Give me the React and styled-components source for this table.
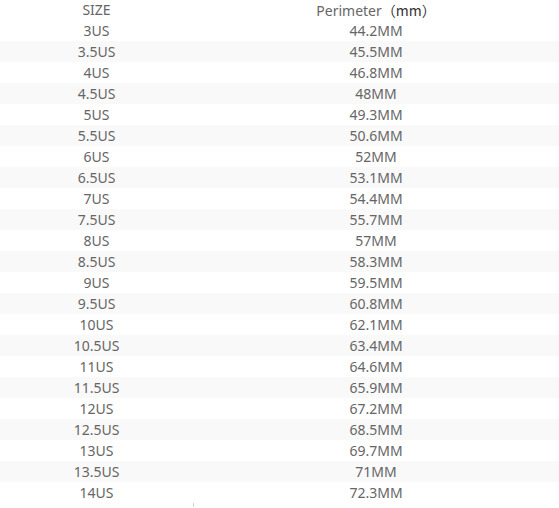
import React from "react";
import styled, { createGlobalStyle } from "styled-components";

const GlobalStyle = createGlobalStyle`
  body {
    margin: 0;
    background: #fff;
    font-family: "Noto Sans", "Open Sans", "Noto Sans CJK SC", sans-serif;
  }
`;

const Table = styled.div`
  width: 559px;
  display: flex;
  flex-direction: column;
  color: #666;
  font-size: 14px;
`;

const Row = styled.div`
  display: grid;
  grid-template-columns: 193px 1fr;
  height: ${(props) => (props.head ? "20px" : "21px")};
  align-items: center;
  background-color: ${(props) => (props.striped ? "#f9f9f9" : "#fff")};
`;

const Cell = styled.div`
  text-align: center;
  line-height: 1;
  white-space: nowrap;
`;

const Unit = styled.span`
  color: #333;
  font-family: "Noto Sans CJK SC", sans-serif;
`;

const Tick = styled.div`
  margin-left: 193px;
  width: 1px;
  height: 4px;
  background-color: #d0d0d0;
`;

const sizes = [
  ["3US", "44.2MM"],
  ["3.5US", "45.5MM"],
  ["4US", "46.8MM"],
  ["4.5US", "48MM"],
  ["5US", "49.3MM"],
  ["5.5US", "50.6MM"],
  ["6US", "52MM"],
  ["6.5US", "53.1MM"],
  ["7US", "54.4MM"],
  ["7.5US", "55.7MM"],
  ["8US", "57MM"],
  ["8.5US", "58.3MM"],
  ["9US", "59.5MM"],
  ["9.5US", "60.8MM"],
  ["10US", "62.1MM"],
  ["10.5US", "63.4MM"],
  ["11US", "64.6MM"],
  ["11.5US", "65.9MM"],
  ["12US", "67.2MM"],
  ["12.5US", "68.5MM"],
  ["13US", "69.7MM"],
  ["13.5US", "71MM"],
  ["14US", "72.3MM"],
];

const App = () => {
  return (
    <>
      <GlobalStyle />
      <Table>
        <Row head>
          <Cell>SIZE</Cell>
          <Cell>
            Perimeter<Unit>（mm）</Unit>
          </Cell>
        </Row>
        {sizes.map(([size, perimeter], i) => (
          <Row key={size} striped={i % 2 === 1}>
            <Cell>{size}</Cell>
            <Cell>{perimeter}</Cell>
          </Row>
        ))}
        <Tick />
      </Table>
    </>
  );
};

export default App;
